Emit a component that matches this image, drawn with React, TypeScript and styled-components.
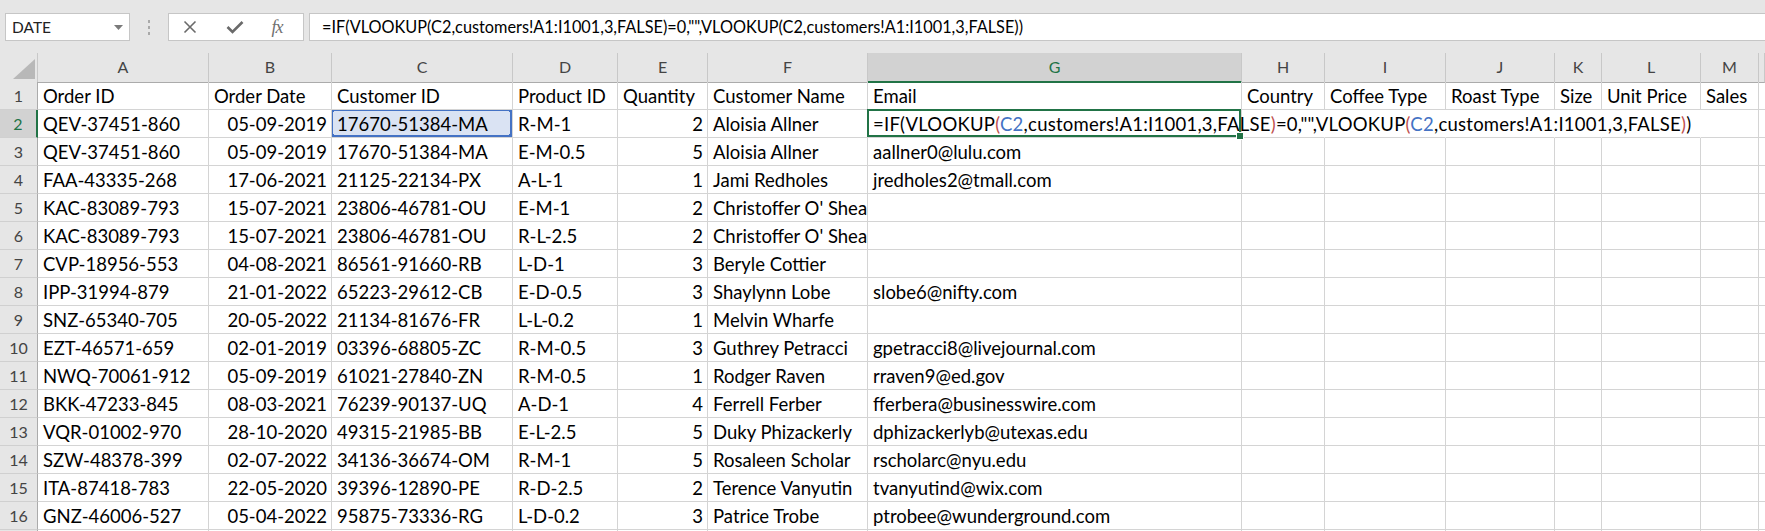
import React from "react";
import styled, { createGlobalStyle } from "styled-components";

const COLS = [38, 171, 123, 181, 105, 90, 160, 374, 83, 121, 109, 47, 99, 58];
const TEMPLATE = COLS.map((c) => `${c}px`).join(" ") + " 1fr";
const LETTERS = ["A", "B", "C", "D", "E", "F", "G", "H", "I", "J", "K", "L", "M", ""];
const RIGHT_COLS = new Set([1, 4]);

const GRID = "#d4d4d4";
const HEAD_BG = "#e6e6e6";
const HEAD_SEL = "#d2d2d2";
const GREEN = "#217346";
const REF_BLUE = "#4472c4";
const PAREN_RED = "#c0504d";

const Global = createGlobalStyle`
  html, body { margin: 0; padding: 0; background: #ffffff; }
  body { font-family: Lato, "Open Sans", "Liberation Sans", sans-serif; color: #000; }
`;

const Page = styled.div`
  height: 100vh;
  overflow: hidden;
  background: #ffffff;
`;

const Toolbar = styled.div`
  height: 53px;
  box-sizing: border-box;
  background: ${HEAD_BG};
  display: flex;
  align-items: flex-start;
  padding: 13px 0 0 5px;
`;

const NameBox = styled.div`
  width: 125px;
  height: 28px;
  box-sizing: border-box;
  background: #fff;
  border: 1px solid #c6c6c6;
  display: flex;
  align-items: center;
  justify-content: space-between;
  padding: 0 6px 0 6px;
  font-size: 15.5px;
  line-height: 26px;
  color: #222;
`;

const Grip = styled.div`
  width: 38px;
  height: 28px;
  display: flex;
  flex-direction: column;
  align-items: center;
  justify-content: center;
  gap: 3px;
`;

const Dot = styled.span`
  width: 2px;
  height: 3px;
  background: #a9a9a9;
`;

const FuncButtons = styled.div`
  width: 136px;
  height: 28px;
  box-sizing: border-box;
  background: #fff;
  border: 1px solid #c6c6c6;
  display: flex;
  align-items: center;
  padding-left: 13px;
`;

const IconSlot = styled.div<{ $w: number }>`
  width: ${(p) => p.$w}px;
  height: 26px;
  display: flex;
  align-items: center;
  justify-content: center;
  color: #6a6a6a;
`;

const Fx = styled.span`
  font-family: "Liberation Serif", "DejaVu Serif", serif;
  font-style: italic;
  font-size: 18px;
  color: #707070;
  letter-spacing: -1px;
`;

const FormulaInput = styled.div`
  flex: 1;
  height: 28px;
  box-sizing: border-box;
  margin-left: 5px;
  margin-right: -2px;
  background: #fff;
  border: 1px solid #c6c6c6;
  padding-left: 12px;
  font-size: 16.3px;
  line-height: 26px;
  white-space: nowrap;
  overflow: hidden;
`;

const Sheet = styled.div`
  display: flex;
  flex-direction: column;
`;

const Row = styled.div<{ $head?: boolean }>`
  display: grid;
  grid-template-columns: ${TEMPLATE};
  height: ${(p) => (p.$head ? 29 : 28)}px;
`;

const ColHead = styled.div<{ $sel?: boolean }>`
  box-sizing: border-box;
  background: ${(p) => (p.$sel ? HEAD_SEL : HEAD_BG)};
  border-right: 1px solid #c8c8c8;
  border-bottom: ${(p) => (p.$sel ? `2px solid ${GREEN}` : "1px solid #ababab")};
  color: ${(p) => (p.$sel ? GREEN : "#444")};
  font-size: 16px;
  line-height: 28px;
  text-align: center;
`;

const Corner = styled.div`
  box-sizing: border-box;
  background: ${HEAD_BG};
  border-right: 1px solid #c8c8c8;
  border-bottom: 1px solid #ababab;
  display: flex;
  align-items: flex-end;
  justify-content: flex-end;
  padding: 0 2px 3px 0;
`;

const RowHead = styled.div<{ $sel?: boolean }>`
  box-sizing: border-box;
  background: ${(p) => (p.$sel ? HEAD_SEL : HEAD_BG)};
  border-right: ${(p) => (p.$sel ? `2px solid ${GREEN}` : "1px solid #ababab")};
  border-bottom: 1px solid #d0d0d0;
  color: ${(p) => (p.$sel ? GREEN : "#444")};
  font-size: 16px;
  line-height: 27px;
  text-align: center;
`;

const Cell = styled.div<{
  $right?: boolean;
  $spill?: boolean;
  $noRight?: boolean;
  $ref?: boolean;
}>`
  position: relative;
  box-sizing: border-box;
  border-right: 1px solid ${(p) => (p.$noRight ? "transparent" : GRID)};
  border-bottom: 1px solid ${GRID};
  background: ${(p) => (p.$ref ? "#dae3f3" : "transparent")};
  padding: 2px 4px 0 5px;
  font-size: 18.5px;
  line-height: 25px;
  letter-spacing: ${(p) => (p.$spill ? "0.25px" : "0")};
  white-space: nowrap;
  overflow: ${(p) => (p.$spill ? "visible" : "hidden")};
  text-align: ${(p) => (p.$right ? "right" : "left")};
  z-index: ${(p) => (p.$spill || p.$ref ? 2 : 0)};
`;

const RefBox = styled.div`
  position: absolute;
  left: -1px;
  top: -1px;
  right: 0;
  bottom: 0;
  border: 2px solid ${REF_BLUE};
  pointer-events: none;
`;

const Handle = styled.span<{ $x: "left" | "right"; $y: "top" | "bottom" }>`
  position: absolute;
  width: 5px;
  height: 5px;
  background: ${REF_BLUE};
  ${(p) => p.$x}: -4px;
  ${(p) => p.$y}: -4px;
`;

const ActiveBox = styled.div`
  position: absolute;
  left: -1px;
  top: -1px;
  right: 0;
  bottom: 0;
  border: 2px solid ${GREEN};
  pointer-events: none;
`;

const FillHandle = styled.span`
  position: absolute;
  right: -5px;
  bottom: -5px;
  width: 6px;
  height: 6px;
  background: ${GREEN};
  border: 1px solid #fff;
`;

const Tok = styled.span<{ $c: string }>`
  color: ${(p) => p.$c};
`;

const FORMULA =
  '=IF(VLOOKUP(C2,customers!A1:I1001,3,FALSE)=0,"",VLOOKUP(C2,customers!A1:I1001,3,FALSE))';

const HEADERS = [
  "Order ID",
  "Order Date",
  "Customer ID",
  "Product ID",
  "Quantity",
  "Customer Name",
  "Email",
  "Country",
  "Coffee Type",
  "Roast Type",
  "Size",
  "Unit Price",
  "Sales",
];

const DATA: string[][] = [
  ["QEV-37451-860", "05-09-2019", "17670-51384-MA", "R-M-1", "2", "Aloisia Allner", "__F__"],
  ["QEV-37451-860", "05-09-2019", "17670-51384-MA", "E-M-0.5", "5", "Aloisia Allner", "aallner0@lulu.com"],
  ["FAA-43335-268", "17-06-2021", "21125-22134-PX", "A-L-1", "1", "Jami Redholes", "jredholes2@tmall.com"],
  ["KAC-83089-793", "15-07-2021", "23806-46781-OU", "E-M-1", "2", "Christoffer O' Shea", ""],
  ["KAC-83089-793", "15-07-2021", "23806-46781-OU", "R-L-2.5", "2", "Christoffer O' Shea", ""],
  ["CVP-18956-553", "04-08-2021", "86561-91660-RB", "L-D-1", "3", "Beryle Cottier", ""],
  ["IPP-31994-879", "21-01-2022", "65223-29612-CB", "E-D-0.5", "3", "Shaylynn Lobe", "slobe6@nifty.com"],
  ["SNZ-65340-705", "20-05-2022", "21134-81676-FR", "L-L-0.2", "1", "Melvin Wharfe", ""],
  ["EZT-46571-659", "02-01-2019", "03396-68805-ZC", "R-M-0.5", "3", "Guthrey Petracci", "gpetracci8@livejournal.com"],
  ["NWQ-70061-912", "05-09-2019", "61021-27840-ZN", "R-M-0.5", "1", "Rodger Raven", "rraven9@ed.gov"],
  ["BKK-47233-845", "08-03-2021", "76239-90137-UQ", "A-D-1", "4", "Ferrell Ferber", "fferbera@businesswire.com"],
  ["VQR-01002-970", "28-10-2020", "49315-21985-BB", "E-L-2.5", "5", "Duky Phizackerly", "dphizackerlyb@utexas.edu"],
  ["SZW-48378-399", "02-07-2022", "34136-36674-OM", "R-M-1", "5", "Rosaleen Scholar", "rscholarc@nyu.edu"],
  ["ITA-87418-783", "22-05-2020", "39396-12890-PE", "R-D-2.5", "2", "Terence Vanyutin", "tvanyutind@wix.com"],
  ["GNZ-46006-527", "05-04-2022", "95875-73336-RG", "L-D-0.2", "3", "Patrice Trobe", "ptrobee@wunderground.com"],
];

const ColoredFormula = () => (
  <>
    <Tok $c="#000">=IF(VLOOKUP</Tok>
    <Tok $c={PAREN_RED}>(</Tok>
    <Tok $c={REF_BLUE}>C2</Tok>
    <Tok $c="#000">,customers!A1:I1001,3,FALSE</Tok>
    <Tok $c={PAREN_RED}>)</Tok>
    <Tok $c="#000">=0,"",VLOOKUP</Tok>
    <Tok $c={PAREN_RED}>(</Tok>
    <Tok $c={REF_BLUE}>C2</Tok>
    <Tok $c="#000">,customers!A1:I1001,3,FALSE</Tok>
    <Tok $c={PAREN_RED}>)</Tok>
    <Tok $c="#000">)</Tok>
  </>
);

const CancelIcon = () => (
  <svg width="14" height="14" viewBox="0 0 14 14">
    <path d="M1.5 1.5 L12.5 12.5 M12.5 1.5 L1.5 12.5" stroke="#6a6a6a" strokeWidth="1.6" fill="none" />
  </svg>
);

const CheckIcon = () => (
  <svg width="18" height="14" viewBox="0 0 18 14">
    <path d="M1.5 7 L6.5 12 L16.5 2" stroke="#6a6a6a" strokeWidth="2.6" fill="none" />
  </svg>
);

const Caret = () => (
  <svg width="9" height="5" viewBox="0 0 9 5">
    <path d="M0 0 L9 0 L4.5 5 Z" fill="#7a7a7a" />
  </svg>
);

const CornerTri = () => (
  <svg width="22" height="20" viewBox="0 0 22 20">
    <path d="M22 0 L22 20 L0 20 Z" fill="#b8b8b8" />
  </svg>
);

export default function App() {
  return (
    <Page>
      <Global />
      <Toolbar>
        <NameBox>
          <span>DATE</span>
          <Caret />
        </NameBox>
        <Grip>
          <Dot />
          <Dot />
          <Dot />
        </Grip>
        <FuncButtons>
          <IconSlot $w={16}>
            <CancelIcon />
          </IconSlot>
          <IconSlot $w={74}>
            <CheckIcon />
          </IconSlot>
          <IconSlot $w={10}>
            <Fx>fx</Fx>
          </IconSlot>
        </FuncButtons>
        <FormulaInput>{FORMULA}</FormulaInput>
      </Toolbar>
      <Sheet>
        <Row $head>
          <Corner>
            <CornerTri />
          </Corner>
          {LETTERS.map((l, i) => (
            <ColHead key={i} $sel={l === "G"}>
              {l}
            </ColHead>
          ))}
        </Row>
        <Row>
          <RowHead>1</RowHead>
          {LETTERS.map((_, i) => (
            <Cell key={i}>{HEADERS[i] ?? ""}</Cell>
          ))}
        </Row>
        {DATA.map((r, ri) => {
          const rowNum = ri + 2;
          const isActiveRow = rowNum === 2;
          return (
            <Row key={rowNum}>
              <RowHead $sel={isActiveRow}>{rowNum}</RowHead>
              {LETTERS.map((_, ci) => {
                const v = r[ci] ?? "";
                if (v === "__F__") {
                  return (
                    <Cell key={ci} $spill>
                      <ColoredFormula />
                      <ActiveBox>
                        <FillHandle />
                      </ActiveBox>
                    </Cell>
                  );
                }
                const isRef = isActiveRow && ci === 2;
                const spillCovered = isActiveRow && ci >= 7 && ci <= 11;
                return (
                  <Cell key={ci} $right={RIGHT_COLS.has(ci)} $noRight={spillCovered} $ref={isRef}>
                    {v}
                    {isRef && (
                      <RefBox>
                        <Handle $x="left" $y="top" />
                        <Handle $x="right" $y="top" />
                        <Handle $x="left" $y="bottom" />
                        <Handle $x="right" $y="bottom" />
                      </RefBox>
                    )}
                  </Cell>
                );
              })}
            </Row>
          );
        })}
        <Row>
          <RowHead />
          {LETTERS.map((_, ci) => (
            <Cell key={ci} />
          ))}
        </Row>
      </Sheet>
    </Page>
  );
}
